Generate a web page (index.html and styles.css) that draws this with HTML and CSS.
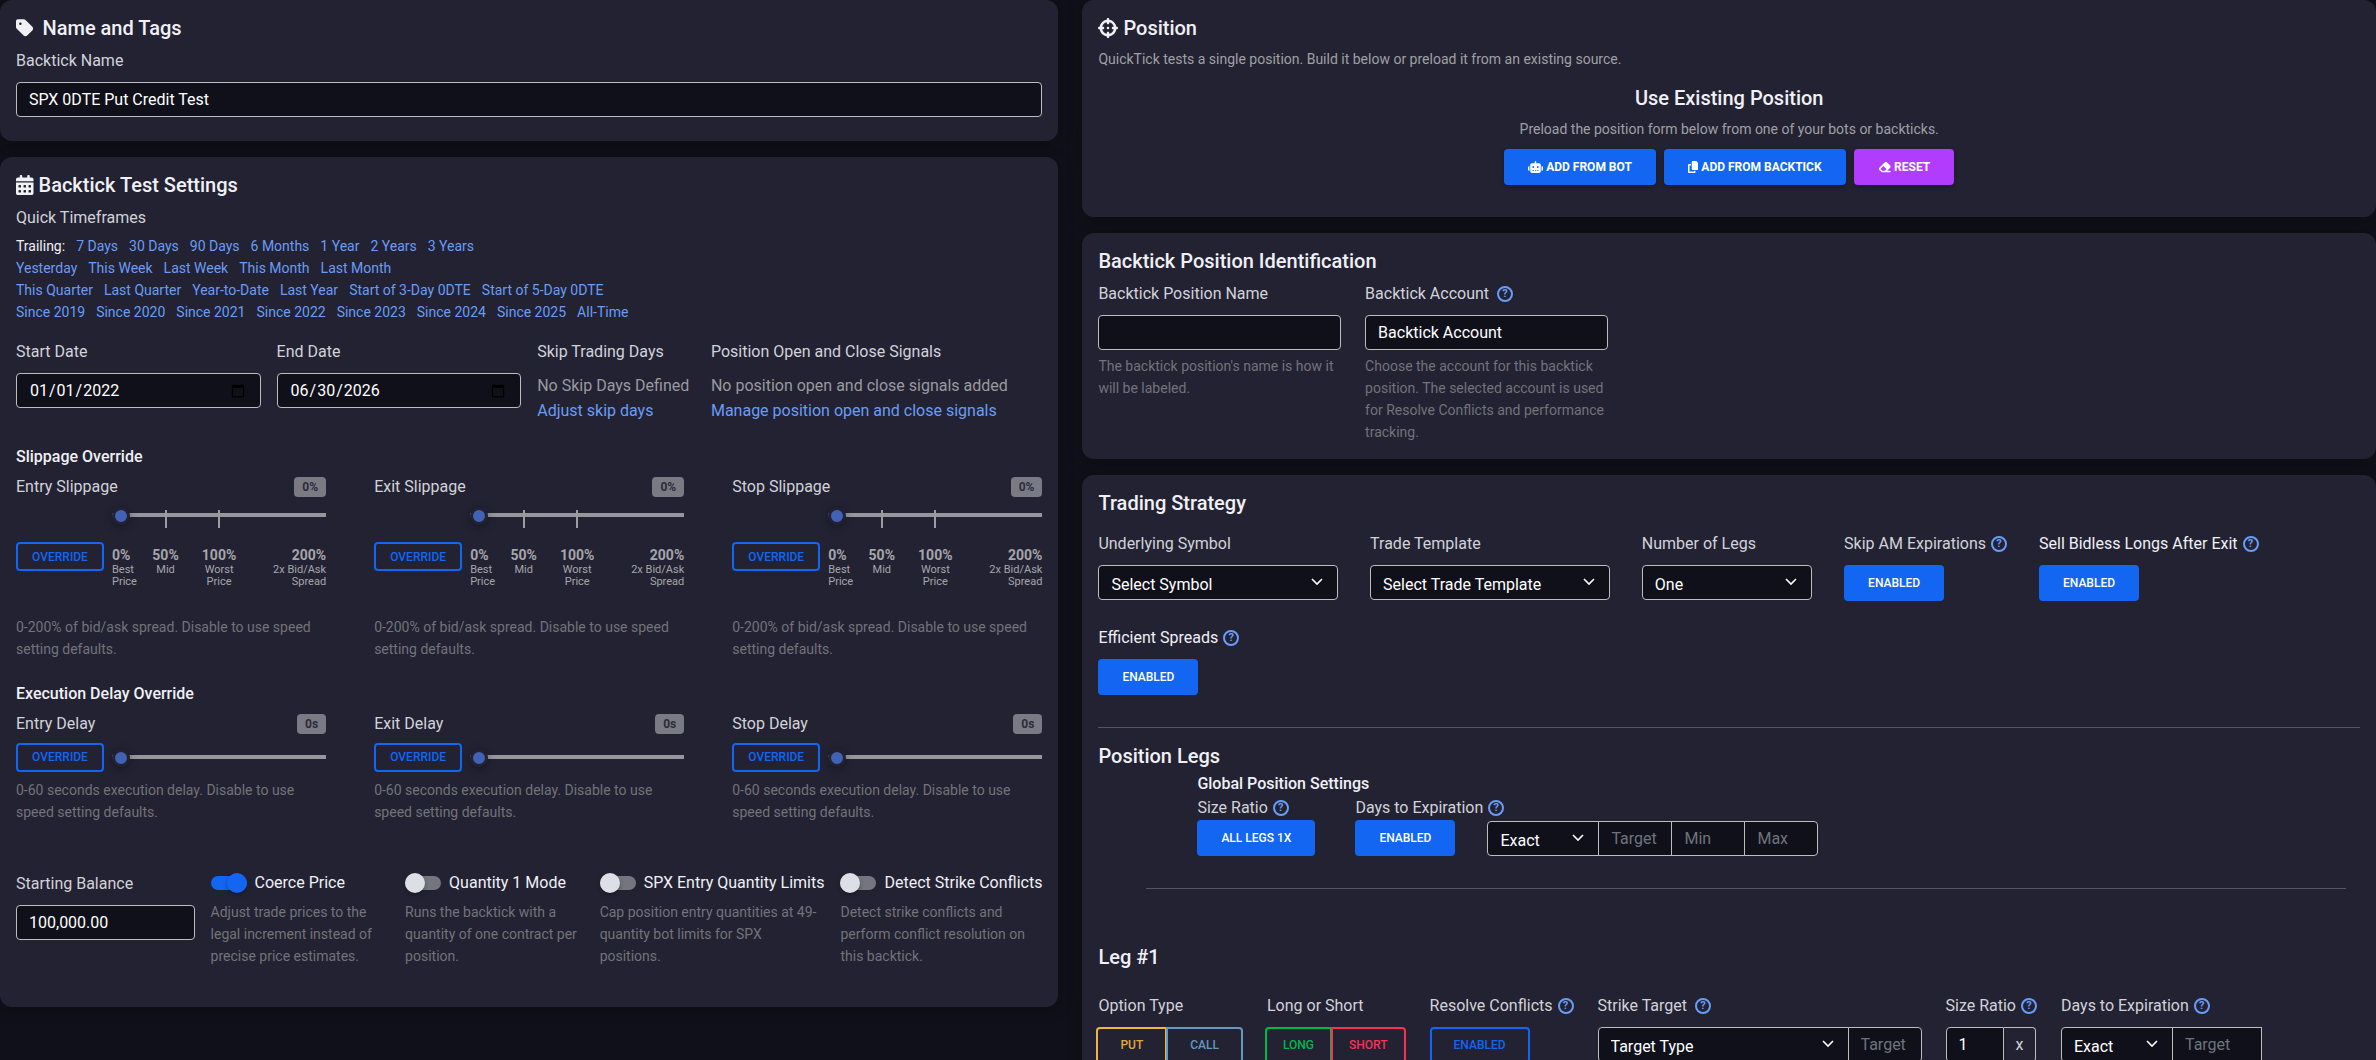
FILE: index.html
```html
<!DOCTYPE html>
<html lang="en">
<head>
<meta charset="UTF-8">
<meta name="viewport" content="width=device-width, initial-scale=1.0">
<title>QuickTick</title>
<link rel="stylesheet" href="styles.css">
</head>
<body>

<main class="page">
    <div class="column">
        <section class="card">
            <h5 class="title wide"><svg class="icon" viewBox="0 0 448 512"><path d="M0 80V229.500c0 17 6.700 33.300 18.700 45.300l176 176c25 25 65.500 25 90.500 0L418.700 317.300c25-25 25-65.500 0-90.500l-176-176c-12-12-28.300-18.700-45.300-18.700H48C21.500 32 0 53.500 0 80zm112 32a32 32 0 1 1 0 64 32 32 0 1 1 0-64z"/></svg>Name and Tags</h5>
            <label for="name">Backtick Name</label>
            <input class="field" type="text" id="name" value="SPX 0DTE Put Credit Test">
        </section>

        <section class="card settings">
            <h5 class="title"><svg class="icon" viewBox="0 0 448 512"><path d="M128 0c17.700 0 32 14.300 32 32V64H288V32c0-17.700 14.300-32 32-32s32 14.300 32 32V64h48c26.500 0 48 21.500 48 48v48H0V112C0 85.500 21.500 64 48 64H96V32c0-17.700 14.300-32 32-32zM0 192H448V464c0 26.500-21.500 48-48 48H48c-26.500 0-48-21.500-48-48V192zm64 80v32c0 8.800 7.200 16 16 16h32c8.800 0 16-7.200 16-16V272c0-8.800-7.200-16-16-16H80c-8.800 0-16 7.200-16 16zm128 0v32c0 8.800 7.200 16 16 16h32c8.800 0 16-7.200 16-16V272c0-8.800-7.200-16-16-16H208c-8.800 0-16 7.200-16 16zm144-16c-8.800 0-16 7.200-16 16v32c0 8.800 7.200 16 16 16h32c8.800 0 16-7.200 16-16V272c0-8.800-7.200-16-16-16H336zM64 400v32c0 8.800 7.200 16 16 16h32c8.800 0 16-7.200 16-16V400c0-8.800-7.200-16-16-16H80c-8.800 0-16 7.200-16 16zm144-16c-8.800 0-16 7.200-16 16v32c0 8.800 7.200 16 16 16h32c8.800 0 16-7.200 16-16V400c0-8.800-7.200-16-16-16H208zm112 16v32c0 8.800 7.200 16 16 16h32c8.800 0 16-7.200 16-16V400c0-8.800-7.200-16-16-16H336c-8.800 0-16 7.200-16 16z"/></svg>Backtick Test Settings</h5>
            <div class="caption">Quick Timeframes</div>
            <div class="timeframes">
                <div><span>Trailing:</span><a href="#">7 Days</a><a href="#">30 Days</a><a href="#">90 Days</a><a href="#">6 Months</a><a href="#">1 Year</a><a href="#">2 Years</a><a href="#">3 Years</a></div>
                <div><a href="#">Yesterday</a><a href="#">This Week</a><a href="#">Last Week</a><a href="#">This Month</a><a href="#">Last Month</a></div>
                <div><a href="#">This Quarter</a><a href="#">Last Quarter</a><a href="#">Year-to-Date</a><a href="#">Last Year</a><a href="#">Start of 3-Day 0DTE</a><a href="#">Start of 5-Day 0DTE</a></div>
                <div><a href="#">Since 2019</a><a href="#">Since 2020</a><a href="#">Since 2021</a><a href="#">Since 2022</a><a href="#">Since 2023</a><a href="#">Since 2024</a><a href="#">Since 2025</a><a href="#">All-Time</a></div>
            </div>

            <div class="dates">
                <div class="col-3">
                    <label for="start">Start Date</label>
                    <input class="field" type="date" id="start" value="2022-01-01">
                </div>
                <div class="col-3">
                    <label for="end">End Date</label>
                    <input class="field" type="date" id="end" value="2026-06-30">
                </div>
                <div class="col-2">
                    <div class="caption">Skip Trading Days</div>
                    <div class="muted">No Skip Days Defined</div>
                    <a href="#">Adjust skip days</a>
                </div>
                <div class="col-4">
                    <div class="caption">Position Open and Close Signals</div>
                    <div class="muted">No position open and close signals added</div>
                    <a href="#">Manage position open and close signals</a>
                </div>
            </div>

            <h6 class="subtitle">Slippage Override</h6>
            <div class="overrides">
                <div class="override">
                    <div class="override-head"><label for="entrySlippage">Entry Slippage</label><span class="badge">0%</span></div>
                    <div class="slippage">
                        <div class="slider ticks"><input type="range" id="entrySlippage" min="0" max="200" value="0"></div>
                        <button type="button" class="btn-outline small">Override</button>
                        <div class="scale">
                            <div><b>0%</b>Best Price</div>
                            <div><b>50%</b>Mid</div>
                            <div><b>100%</b>Worst<br>Price</div>
                            <div><b>200%</b>2x Bid/Ask<br>Spread</div>
                        </div>
                    </div>
                    <p class="help-text">0-200% of bid/ask spread. Disable to use speed setting defaults.</p>
                </div>
                <div class="override">
                    <div class="override-head"><label for="exitSlippage">Exit Slippage</label><span class="badge">0%</span></div>
                    <div class="slippage">
                        <div class="slider ticks"><input type="range" id="exitSlippage" min="0" max="200" value="0"></div>
                        <button type="button" class="btn-outline small">Override</button>
                        <div class="scale">
                            <div><b>0%</b>Best Price</div>
                            <div><b>50%</b>Mid</div>
                            <div><b>100%</b>Worst<br>Price</div>
                            <div><b>200%</b>2x Bid/Ask<br>Spread</div>
                        </div>
                    </div>
                    <p class="help-text">0-200% of bid/ask spread. Disable to use speed setting defaults.</p>
                </div>
                <div class="override">
                    <div class="override-head"><label for="stopSlippage">Stop Slippage</label><span class="badge">0%</span></div>
                    <div class="slippage">
                        <div class="slider ticks"><input type="range" id="stopSlippage" min="0" max="200" value="0"></div>
                        <button type="button" class="btn-outline small">Override</button>
                        <div class="scale">
                            <div><b>0%</b>Best Price</div>
                            <div><b>50%</b>Mid</div>
                            <div><b>100%</b>Worst<br>Price</div>
                            <div><b>200%</b>2x Bid/Ask<br>Spread</div>
                        </div>
                    </div>
                    <p class="help-text">0-200% of bid/ask spread. Disable to use speed setting defaults.</p>
                </div>
            </div>

            <h6 class="subtitle">Execution Delay Override</h6>
            <div class="overrides">
                <div class="override">
                    <div class="override-head"><label for="entryDelay">Entry Delay</label><span class="badge">0s</span></div>
                    <div class="delay">
                        <button type="button" class="btn-outline small">Override</button>
                        <div class="slider"><input type="range" id="entryDelay" min="0" max="60" value="0"></div>
                    </div>
                    <p class="help-text">0-60 seconds execution delay. Disable to use speed setting defaults.</p>
                </div>
                <div class="override">
                    <div class="override-head"><label for="exitDelay">Exit Delay</label><span class="badge">0s</span></div>
                    <div class="delay">
                        <button type="button" class="btn-outline small">Override</button>
                        <div class="slider"><input type="range" id="exitDelay" min="0" max="60" value="0"></div>
                    </div>
                    <p class="help-text">0-60 seconds execution delay. Disable to use speed setting defaults.</p>
                </div>
                <div class="override">
                    <div class="override-head"><label for="stopDelay">Stop Delay</label><span class="badge">0s</span></div>
                    <div class="delay">
                        <button type="button" class="btn-outline small">Override</button>
                        <div class="slider"><input type="range" id="stopDelay" min="0" max="60" value="0"></div>
                    </div>
                    <p class="help-text">0-60 seconds execution delay. Disable to use speed setting defaults.</p>
                </div>
            </div>

            <div class="options">
                <div class="option">
                    <label for="balance">Starting Balance</label>
                    <input class="field" type="text" id="balance" value="100,000.00">
                </div>
                <div class="option">
                    <label class="switch"><input type="checkbox" checked>Coerce Price</label>
                    <p class="help-text">Adjust trade prices to the legal increment instead of precise price estimates.</p>
                </div>
                <div class="option">
                    <label class="switch"><input type="checkbox">Quantity 1 Mode</label>
                    <p class="help-text">Runs the backtick with a quantity of one contract per position.</p>
                </div>
                <div class="option">
                    <label class="switch"><input type="checkbox">SPX Entry Quantity Limits</label>
                    <p class="help-text">Cap position entry quantities at 49-quantity bot limits for SPX positions.</p>
                </div>
                <div class="option">
                    <label class="switch"><input type="checkbox">Detect Strike Conflicts</label>
                    <p class="help-text">Detect strike conflicts and perform conflict resolution on this backtick.</p>
                </div>
            </div>
        </section>
    </div>

    <div class="column">
        <section class="card position">
            <h5 class="title"><svg class="icon" viewBox="0 0 512 512"><path d="M256 0c17.700 0 32 14.300 32 32V42.400c93.700 13.900 167.700 88 181.600 181.600H480c17.700 0 32 14.300 32 32s-14.300 32-32 32H469.600c-13.900 93.700-88 167.700-181.600 181.600V480c0 17.700-14.300 32-32 32s-32-14.300-32-32V469.600C130.300 455.700 56.300 381.700 42.400 288H32c-17.700 0-32-14.300-32-32s14.300-32 32-32H42.400C56.300 130.300 130.300 56.300 224 42.400V32c0-17.700 14.300-32 32-32zM107.400 288c12.500 58.300 58.400 104.100 116.600 116.600V384c0-17.700 14.300-32 32-32s32 14.300 32 32v20.600c58.300-12.500 104.100-58.400 116.600-116.600H384c-17.700 0-32-14.300-32-32s14.300-32 32-32h20.600C392.100 165.700 346.300 119.900 288 107.400V128c0 17.700-14.300 32-32 32s-32-14.300-32-32V107.400C165.700 119.900 119.900 165.700 107.400 224H128c17.700 0 32 14.300 32 32s-14.300 32-32 32H107.400zM256 224a32 32 0 1 1 0 64 32 32 0 1 1 0-64z"/></svg>Position</h5>
            <p class="lead">QuickTick tests a single position. Build it below or preload it from an existing source.</p>
            <div class="existing">
                <h5 class="title">Use Existing Position</h5>
                <p class="lead">Preload the position form below from one of your bots or backticks.</p>
                <div class="actions">
                    <button type="button" class="btn raised"><svg class="icon" viewBox="0 0 640 512"><path d="M320 0c17.700 0 32 14.300 32 32V96H472c39.800 0 72 32.200 72 72V440c0 39.800-32.200 72-72 72H168c-39.800 0-72-32.200-72-72V168c0-39.800 32.200-72 72-72H288V32c0-17.700 14.300-32 32-32zM208 384c-8.800 0-16 7.200-16 16s7.200 16 16 16h32c8.800 0 16-7.200 16-16s-7.200-16-16-16H208zm96 0c-8.800 0-16 7.200-16 16s7.200 16 16 16h32c8.800 0 16-7.200 16-16s-7.200-16-16-16H304zm96 0c-8.800 0-16 7.200-16 16s7.200 16 16 16h32c8.800 0 16-7.200 16-16s-7.200-16-16-16H400zM264 256a40 40 0 1 0 -80 0 40 40 0 1 0 80 0zm152 40a40 40 0 1 0 0-80 40 40 0 1 0 0 80zM48 224H64V416H48c-26.500 0-48-21.500-48-48V272c0-26.500 21.500-48 48-48zm544 0c26.500 0 48 21.500 48 48v96c0 26.500-21.500 48-48 48H576V224h16z"/></svg>Add from Bot</button>
                    <button type="button" class="btn raised"><svg class="icon" viewBox="0 0 448 512"><path d="M208 0H332.100c12.700 0 24.900 5.100 33.900 14.100l67.900 67.900c9 9 14.100 21.200 14.100 33.900V336c0 26.500-21.500 48-48 48H208c-26.500 0-48-21.500-48-48V48c0-26.500 21.500-48 48-48zM48 128h80v64H64V448H256V416h64v48c0 26.500-21.500 48-48 48H48c-26.500 0-48-21.500-48-48V176c0-26.500 21.500-48 48-48z"/></svg>Add from Backtick</button>
                    <button type="button" class="btn raised reset"><svg class="icon" viewBox="0 0 576 512"><path d="M290.700 57.400L57.400 290.700c-25 25-25 65.500 0 90.500l80 80c12 12 28.300 18.700 45.300 18.700H288h9.400H512c17.700 0 32-14.300 32-32s-14.300-32-32-32H387.900L518.600 285.300c25-25 25-65.500 0-90.500L381.300 57.400c-25-25-65.500-25-90.500 0zM297.400 416H288l-105.400 0-80-80L227.300 211.300 364.700 348.700 297.400 416z"/></svg>Reset</button>
                </div>
            </div>
        </section>

        <section class="card identification">
            <h5 class="title">Backtick Position Identification</h5>
            <div class="identity">
                <div>
                    <label for="positionName">Backtick Position Name</label>
                    <input class="field" type="text" id="positionName">
                    <p class="help-text">The backtick position's name is how it will be labeled.</p>
                </div>
                <div>
                    <div class="label-row far"><label for="account">Backtick Account</label><button type="button" class="help">?</button></div>
                    <input class="field" type="text" id="account" value="Backtick Account">
                    <p class="help-text">Choose the account for this backtick position. The selected account is used for Resolve Conflicts and performance tracking.</p>
                </div>
            </div>
        </section>

        <section class="card">
            <h5 class="title">Trading Strategy</h5>
            <div class="strategy">
                <div class="w-symbol">
                    <label for="symbol">Underlying Symbol</label>
                    <select class="field" id="symbol"><option>Select Symbol</option></select>
                </div>
                <div class="w-symbol">
                    <label for="template">Trade Template</label>
                    <select class="field" id="template"><option>Select Trade Template</option></select>
                </div>
                <div class="w-legs">
                    <label for="legs">Number of Legs</label>
                    <select class="field" id="legs"><option>One</option></select>
                </div>
                <div>
                    <div class="label-row"><label for="skipAm">Skip AM Expirations</label><button type="button" class="help">?</button></div>
                    <button type="button" class="btn" id="skipAm">Enabled</button>
                </div>
                <div>
                    <div class="label-row bright"><label for="bidless">Sell Bidless Longs After Exit</label><button type="button" class="help">?</button></div>
                    <button type="button" class="btn" id="bidless">Enabled</button>
                </div>
                <div>
                    <div class="label-row bright"><label for="spreads">Efficient Spreads</label><button type="button" class="help">?</button></div>
                    <button type="button" class="btn" id="spreads">Enabled</button>
                </div>
            </div>

            <hr>

            <h5 class="title">Position Legs</h5>
            <div class="global">
                <div class="global-body">
                    <h6 class="subtitle">Global Position Settings</h6>
                    <div class="global-row">
                        <div>
                            <div class="label-row"><label for="allLegs">Size Ratio</label><button type="button" class="help">?</button></div>
                            <button type="button" class="btn" id="allLegs">All Legs 1x</button>
                        </div>
                        <div>
                            <div class="label-row"><label for="globalDte">Days to Expiration</label><button type="button" class="help">?</button></div>
                            <div class="dte">
                                <button type="button" class="btn" id="globalDte">Enabled</button>
                                <div class="group">
                                    <select class="field exact" aria-label="Expiration match"><option>Exact</option></select>
                                    <input class="field number" type="text" placeholder="Target" aria-label="Target">
                                    <input class="field number" type="text" placeholder="Min" aria-label="Min">
                                    <input class="field number" type="text" placeholder="Max" aria-label="Max">
                                </div>
                            </div>
                        </div>
                    </div>
                </div>
                <hr>
            </div>

            <h5 class="title">Leg #1</h5>
            <div class="leg">
                <div>
                    <div class="caption">Option Type</div>
                    <div class="group toggle">
                        <button type="button" class="btn-outline put">Put</button>
                        <button type="button" class="btn-outline call">Call</button>
                    </div>
                </div>
                <div>
                    <div class="caption">Long or Short</div>
                    <div class="group toggle">
                        <button type="button" class="btn-outline long">Long</button>
                        <button type="button" class="btn-outline short">Short</button>
                    </div>
                </div>
                <div>
                    <div class="label-row"><label for="resolve">Resolve Conflicts</label><button type="button" class="help">?</button></div>
                    <button type="button" class="btn-outline" id="resolve">Enabled</button>
                </div>
                <div class="strike">
                    <div class="label-row far"><label for="targetType">Strike Target</label><button type="button" class="help">?</button></div>
                    <div class="group">
                        <select class="field" id="targetType"><option>Target Type</option></select>
                        <input class="field number" type="text" placeholder="Target" aria-label="Strike target">
                    </div>
                </div>
                <div>
                    <div class="label-row"><label for="ratio">Size Ratio</label><button type="button" class="help">?</button></div>
                    <div class="group">
                        <input class="field ratio" type="text" id="ratio" value="1">
                        <span class="addon">x</span>
                    </div>
                </div>
                <div>
                    <div class="label-row"><label for="legDte">Days to Expiration</label><button type="button" class="help">?</button></div>
                    <div class="group open">
                        <select class="field exact" id="legDte"><option>Exact</option></select>
                        <input class="field dte-target" type="text" placeholder="Target" aria-label="Days target">
                    </div>
                </div>
            </div>
        </section>
    </div>
</main>

</body>
</html>
```
FILE: styles.css
```css
* {
    box-sizing: border-box;
}

body {
    font-family: Roboto, sans-serif;
    font-size: 16px;
    line-height: 25px;
    background-color: #10101a;
    color: #f0f0f5;
    margin: 0;
}

.page {
    display: grid;
    grid-template-columns: minmax(0, 9fr) minmax(0, 11fr);
    gap: 24px;
    height: 100vh;
    overflow: hidden;
}

.column {
    display: flex;
    flex-direction: column;
    gap: 16px;
}

.card {
    background-color: #222233;
    border-radius: 12px;
    padding: 16px 16px 24px;
    box-shadow: 0 2px 15px rgba(0, 0, 0, 0.3);
    flex-shrink: 0;
}

.settings {
    padding-bottom: 40px;
}

.position {
    padding-bottom: 32px;
}

.identification {
    padding-bottom: 16px;
}

.title {
    display: flex;
    align-items: center;
    gap: 5px;
    margin: 0 0 8px;
    font-size: 20px;
    line-height: 24px;
    font-weight: 500;
}

.title.wide {
    gap: 9px;
}

.subtitle {
    margin: 21px 0 4px;
    font-size: 16px;
    line-height: 26px;
    font-weight: 500;
}

.icon {
    height: 1em;
    fill: currentColor;
}

a {
    color: #6a9cf5;
    text-decoration: none;
}

p {
    margin: 0;
}

hr {
    height: 1px;
    margin: 32px 0 16px;
    border: none;
    background-color: #565663;
}

label,
.caption {
    display: block;
    margin-bottom: 8px;
    line-height: 26px;
    color: #d2d2d9;
}

.label-row {
    display: flex;
    align-items: center;
    gap: 5px;
    margin-bottom: 8px;
}

.label-row.far {
    gap: 8px;
}

.label-row label {
    margin: 0;
    white-space: nowrap;
}

.label-row.bright label {
    color: #f0f0f5;
}

.muted {
    color: #9a9a9e;
}

.lead,
.help-text {
    font-size: 14px;
    line-height: 22px;
}

.lead {
    color: #a0a0a3;
}

.help-text {
    color: #737378;
}

/* form controls */

input,
select,
button {
    font-family: inherit;
}

.field {
    display: block;
    width: 100%;
    height: 35px;
    padding: 0 12px;
    border: 1px solid #bdbdbd;
    border-radius: 4px;
    background-color: #10101a;
    color: #fff;
    font-size: 16px;
}

.field::placeholder {
    color: #6c757d;
    opacity: 1;
}

select.field {
    appearance: none;
    padding-top: 3px;
    padding-right: 32px;
    background-image: url("data:image/svg+xml,%3Csvg xmlns='http://www.w3.org/2000/svg' viewBox='0 0 12 8'%3E%3Cpath d='M1 1l5 5 5-5' fill='none' stroke='white' stroke-width='1.600'/%3E%3C/svg%3E");
    background-repeat: no-repeat;
    background-size: 12px 8px;
    background-position: right 14px top 12px;
}

.btn,
.btn-outline {
    height: 36px;
    padding: 0 24px;
    border: none;
    border-radius: 4px;
    background-color: #1266f1;
    color: #fff;
    font-size: 12px;
    font-weight: 500;
    text-transform: uppercase;
    white-space: nowrap;
    cursor: pointer;
}

.btn-outline {
    padding: 0 22px;
    border: 2px solid #1266f1;
    background-color: transparent;
    color: #1266f1;
}

.btn-outline.small {
    height: 29px;
    padding: 0 14px;
}

.btn.raised {
    display: flex;
    align-items: center;
    gap: 3px;
    font-weight: 700;
    box-shadow: 0 2px 5px rgba(0, 0, 0, 0.3);
}

.btn.reset {
    background-color: #b23cfd;
}

.help {
    width: 16px;
    height: 16px;
    padding: 0;
    border: 2px solid #6a9cf5;
    border-radius: 50%;
    background: none;
    color: #6a9cf5;
    font-size: 11px;
    line-height: 12px;
    font-weight: 700;
}

.badge {
    height: 20px;
    padding: 0 8px;
    border-radius: 4px;
    background-color: #7a7a84;
    color: #2b2b3a;
    font-size: 12px;
    line-height: 20px;
    font-weight: 700;
}

.group {
    display: flex;
}

/* outline buttons hang over the label edge by their border */
.group.toggle {
    margin-left: -2px;
}

.group > * {
    border-radius: 0;
}

.group > :first-child {
    border-radius: 4px 0 0 4px;
}

.group > :last-child {
    border-radius: 0 4px 4px 0;
}

.group.open > :last-child {
    border-radius: 0;
}

.group > .field + .field,
.group > .btn-outline + .btn-outline {
    margin-left: -1px;
}

/* test settings */

.timeframes {
    margin: -4px 0 16px;
    font-size: 14px;
    line-height: 22px;
}

.timeframes div {
    display: flex;
    gap: 11px;
}

.dates {
    display: grid;
    grid-template-columns: repeat(12, minmax(0, 1fr));
    gap: 16px;
}

.col-2 {
    grid-column: span 2;
}

.col-3 {
    grid-column: span 3;
}

.col-4 {
    grid-column: span 4;
}

.overrides {
    display: grid;
    grid-template-columns: repeat(3, minmax(0, 1fr));
    gap: 48px;
}

.override-head {
    display: flex;
    justify-content: space-between;
    align-items: center;
}

.override-head label {
    margin: 0;
}

.slippage {
    display: grid;
    grid-template-columns: 88px minmax(0, 1fr);
    gap: 12px 8px;
    margin-bottom: 28px;
}

.slippage .slider {
    grid-column: 2;
}

.delay {
    display: grid;
    grid-template-columns: 88px minmax(0, 1fr);
    align-items: center;
    gap: 8px;
    margin: 5px 0 8px;
    height: 29px;
}

.slider {
    position: relative;
    display: flex;
    align-items: center;
    height: 30px;
}

.slider input {
    appearance: none;
    width: 100%;
    height: 18px;
    margin: 0;
    background: none;
}

.slider input::-webkit-slider-runnable-track {
    height: 4px;
    background-color: #96969c;
}

.slider input::-webkit-slider-thumb {
    appearance: none;
    width: 18px;
    height: 18px;
    margin-top: -6px;
    border: 3px solid #222233;
    border-radius: 50%;
    background-color: #4162b5;
    box-shadow: 0 2px 8px rgba(0, 0, 0, 0.35);
}

/* marks at 50% and 100% of the 0-200 range */
.ticks::before,
.ticks::after {
    content: "";
    position: absolute;
    top: 10px;
    left: 25%;
    width: 2px;
    height: 18px;
    margin-left: -1px;
    background-color: #9c9ca2;
}

.ticks::after {
    left: 50%;
}

.scale {
    display: grid;
    grid-template-columns: minmax(0, 1fr) minmax(0, 2fr) minmax(0, 2fr) minmax(0, 3fr);
    margin-top: 4px;
    color: #a6a6aa;
    font-size: 11px;
    line-height: 12px;
    text-align: center;
}

.scale div:first-child {
    text-align: left;
}

.scale div:last-child {
    text-align: right;
}

.scale b {
    display: block;
    font-size: 14px;
    line-height: 18px;
}

.options {
    display: flex;
    gap: 16px;
    margin-top: 48px;
}

.option {
    flex: 1 1 0;
}

.option .field {
    min-width: 0;
}

.switch {
    display: flex;
    align-items: center;
    gap: 8px;
    margin-bottom: 6px;
    line-height: 24px;
    color: #f0f0f5;
    white-space: nowrap;
}

.switch input {
    appearance: none;
    display: flex;
    align-items: center;
    width: 36px;
    height: 14px;
    margin: 0;
    border-radius: 7px;
    background-color: #757580;
}

.switch input::before {
    content: "";
    width: 20px;
    height: 20px;
    border-radius: 50%;
    background-color: #dcdfe5;
    box-shadow: 0 2px 4px rgba(0, 0, 0, 0.3);
    flex-shrink: 0;
}

.switch input:checked {
    justify-content: flex-end;
    background-color: #1266f1;
}

.switch input:checked::before {
    background-color: #1266f1;
}

/* position */

.existing {
    display: flex;
    flex-direction: column;
    align-items: center;
    margin-top: 16px;
}

.actions {
    display: flex;
    gap: 8px;
    margin-top: 9px;
}

.identity {
    display: grid;
    grid-template-columns: 1fr 1fr 3fr;
    gap: 24px;
}

.identity .help-text {
    margin-top: 5px;
}

.strategy {
    display: flex;
    flex-wrap: wrap;
    gap: 24px 32px;
    margin-top: 16px;
}

.w-symbol {
    flex: 0 0 19%;
}

.w-legs {
    flex: 0 0 13.5%;
}

.global {
    margin: -4px 14px 56px 48px;
}

.global-body {
    padding-left: 51px;
}

.global .subtitle {
    margin: 0;
    line-height: 24px;
}

.global .label-row {
    margin: 0;
}

.global .label-row label {
    line-height: 24px;
}

.global-row {
    display: flex;
    gap: 40px;
}

.dte {
    display: flex;
    align-items: flex-end;
    gap: 32px;
}

.exact {
    width: 112px;
}

.number {
    width: 74px;
}

.leg {
    display: flex;
    gap: 24px;
    margin-top: 24px;
}

.strike {
    flex: 0 0 324px;
}

.ratio {
    width: 58px;
}

.addon {
    padding: 0 12px;
    border: 1px solid #bdbdbd;
    border-left: none;
    color: #d2d2d9;
    line-height: 33px;
}

.dte-target {
    width: 90px;
}

.btn-outline.put {
    border-color: #f0b441;
    color: #e4a83b;
}

.btn-outline.call {
    border-color: #6399be;
    color: #6399be;
}

.btn-outline.long,
.btn-outline.short {
    padding: 0 16px;
}

.btn-outline.long {
    border-color: #00b74a;
    color: #00b74a;
}

.btn-outline.short {
    border-color: #f93154;
    color: #f93154;
}
```
